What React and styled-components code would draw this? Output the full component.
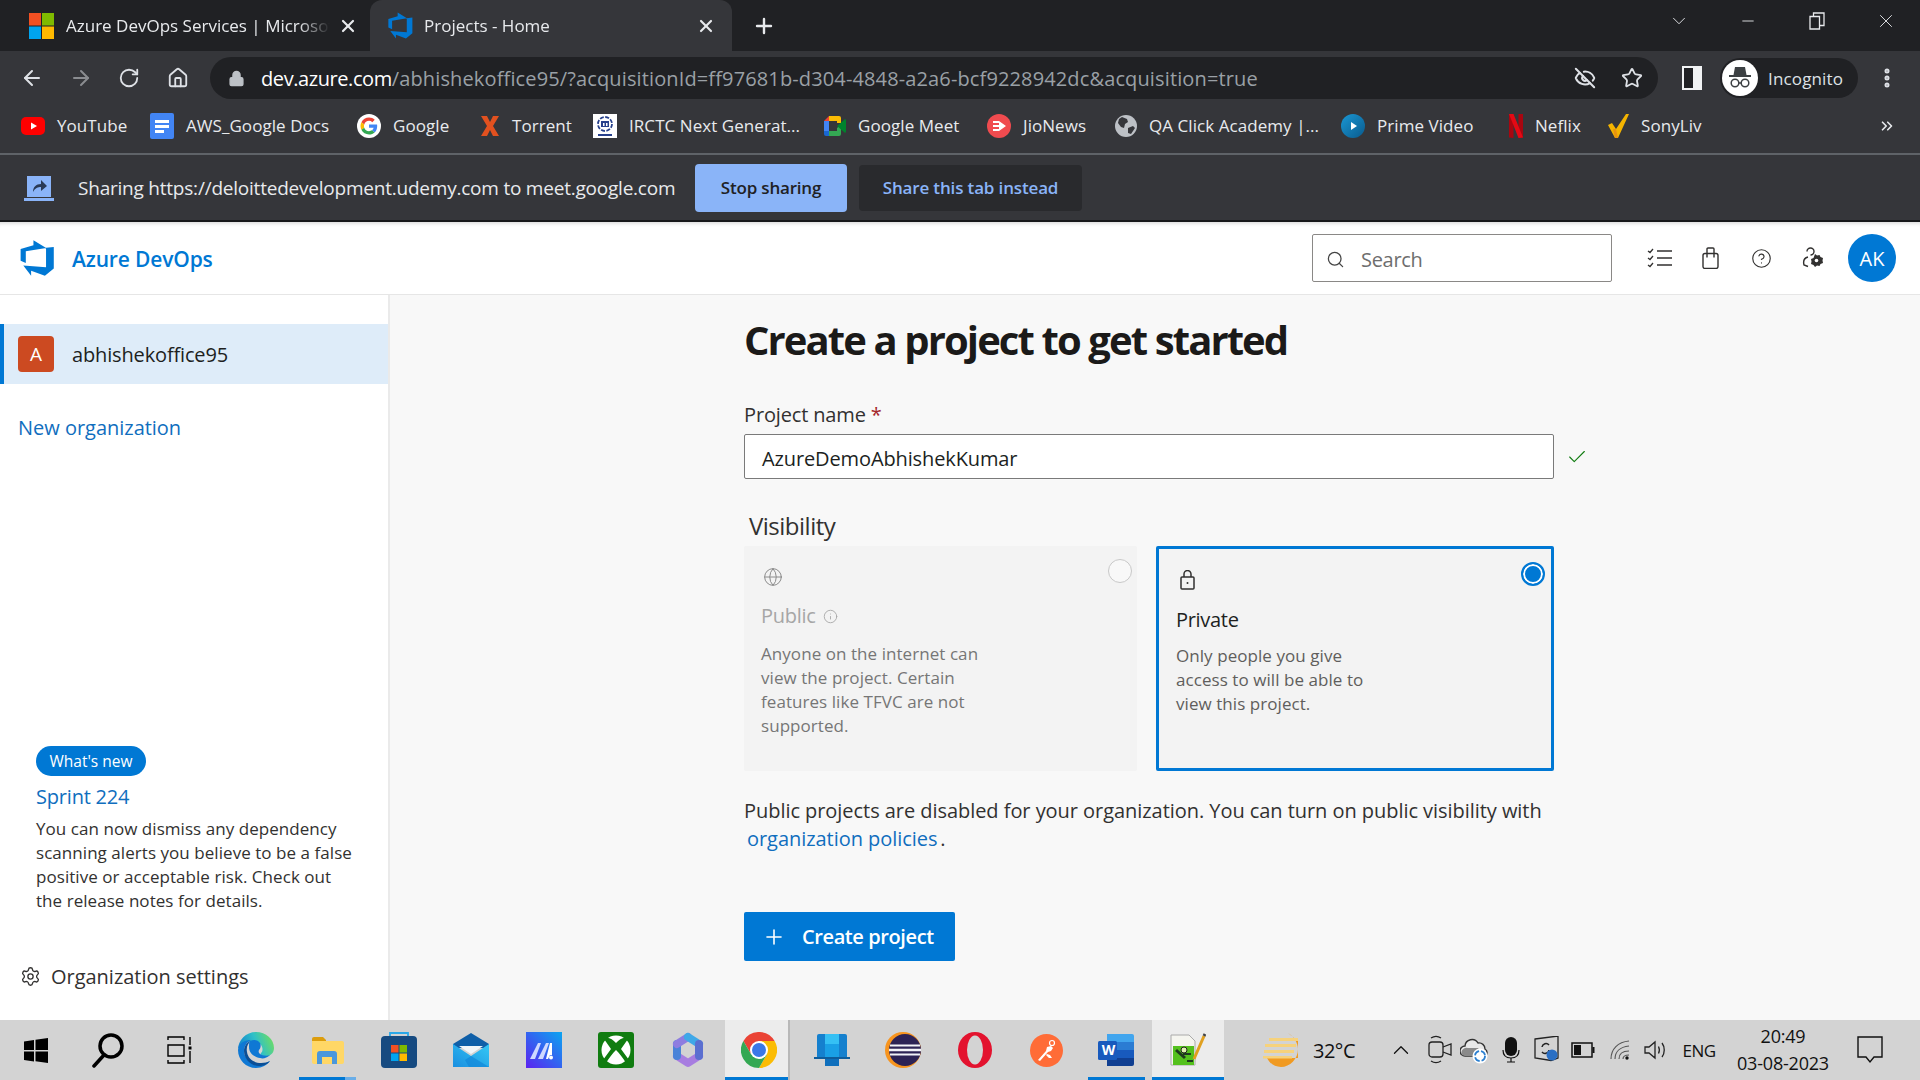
import React from "react";
import styled, { createGlobalStyle } from "styled-components";
import {
  ArrowLeft, ArrowRight, RotateCw, House, Lock, EyeOff, Star, EllipsisVertical, ChevronsRight,
  Plus, X, ChevronDown, Minus, Search, CircleHelp, Settings, Globe, Info, Check, ChevronUp,
} from "lucide-react";

const GlobalStyle = createGlobalStyle`
  html, body { margin: 0; padding: 0; height: 100%; overflow: hidden; }
  body { font-family: "Open Sans", "Noto Sans", sans-serif; }
  * { box-sizing: border-box; }
`;

const Page = styled.div`
  width: 1920px;
  height: 1080px;
  display: flex;
  flex-direction: column;
  overflow: hidden;
`;

/* browser chrome */
const TabStrip = styled.div`
  height: 51px;
  flex: none;
  display: flex;
  align-items: stretch;
  background: #202124;
  color: #e8eaed;
`;
const Tab = styled.div`
  width: ${(p) => p.$w}px;
  display: flex;
  align-items: center;
  padding-left: ${(p) => p.$pad}px;
  gap: ${(p) => p.$gap || 12}px;
  font-size: 17px;
  letter-spacing: 0;
  white-space: nowrap;
  background: ${(p) => (p.$active ? "#35363a" : "transparent")};
  border-radius: 12px 12px 0 0;
`;
const TabTitle = styled.span`
  width: ${(p) => p.$w}px;
  overflow: hidden;
  -webkit-mask-image: linear-gradient(90deg, #000 88%, transparent);
  mask-image: linear-gradient(90deg, #000 88%, transparent);
`;
const TabClose = styled.div`
  margin-left: ${(p) => p.$ml || 0}px;
  display: flex;
`;
const NewTab = styled.div`
  width: 64px;
  display: flex;
  align-items: center;
  justify-content: center;
`;
const WindowControls = styled.div`
  margin-left: auto;
  display: flex;
  align-items: center;
  padding-bottom: 9px;
`;
const WinButton = styled.div`
  width: 69px;
  display: flex;
  justify-content: center;
`;
const Toolbar = styled.div`
  height: 49px;
  flex: none;
  display: flex;
  align-items: center;
  background: #35363a;
  color: #dee1e6;
  padding-left: 8px;
  padding-top: 5px;
`;
const NavButton = styled.div`
  width: 48.5px;
  display: flex;
  justify-content: center;
  color: ${(p) => (p.$dim ? "#8a8c90" : "#dee1e6")};
`;
const Omnibox = styled.div`
  width: 1448px;
  height: 42px;
  margin-left: 8px;
  border-radius: 21px;
  background: #202124;
  display: flex;
  align-items: center;
  padding-left: 18px;
  padding-right: 15px;
  gap: 16px;
`;
const UrlText = styled.div`
  flex: 1;
  font-size: 20px;
  letter-spacing: 0.13px;
  color: #9aa0a6;
  white-space: nowrap;
`;
const UrlHost = styled.span`
  color: #fff;
  letter-spacing: -0.42px;
`;
const OmniIcons = styled.div`
  display: flex;
  align-items: center;
  gap: 25px;
`;
const SidePanel = styled.div`
  width: 20px;
  height: 24px;
  margin-left: 24px;
  border: 2px solid #f1f3f4;
  border-right-width: 9px;
  background: #202124;
`;
const Profile = styled.div`
  width: 138px;
  height: 40px;
  margin-left: 18px;
  border-radius: 20px;
  background: #202124;
  display: flex;
  align-items: center;
  padding-left: 2px;
  gap: 10px;
  font-size: 17px;
  letter-spacing: 0.15px;
`;
const ProfileAvatar = styled.div`
  width: 36px;
  height: 36px;
  border-radius: 50%;
  background: #fff;
  display: flex;
  align-items: center;
  justify-content: center;
`;
const MoreButton = styled.div`
  margin-left: 17px;
  display: flex;
`;
const BookmarkBar = styled.div`
  height: 55px;
  flex: none;
  display: flex;
  align-items: center;
  padding-left: 21px;
  padding-bottom: 2px;
  background: #35363a;
  color: #e8eaed;
  border-bottom: 2px solid #5f6368;
`;
const Bookmark = styled.div`
  width: ${(p) => p.$w}px;
  display: flex;
  align-items: center;
  gap: ${(p) => p.$gap || 12}px;
  font-size: 17px;
  letter-spacing: 0.06px;
  white-space: nowrap;
`;
const BookmarkIcon = styled.div`
  width: 24px;
  height: 26px;
  flex: none;
  display: flex;
  align-items: center;
  justify-content: center;
`;
const MoreBookmarks = styled.div`
  margin-left: auto;
  padding-right: 24px;
  display: flex;
`;
const ShareBar = styled.div`
  height: 67px;
  flex: none;
  display: flex;
  align-items: center;
  padding-left: 24px;
  padding-top: 1px;
  background: #35363a;
  color: #e8eaed;
  border-bottom: 2px solid #17181a;
`;
const ShareText = styled.div`
  margin-left: 24px;
  width: 617px;
  font-size: 19px;
  letter-spacing: -0.22px;
  white-space: nowrap;
`;
const ShareButton = styled.div`
  height: ${(p) => (p.$primary ? 48 : 46)}px;
  width: ${(p) => p.$w}px;
  margin-right: 12px;
  padding-bottom: 2px;
  border-radius: 4px;
  display: flex;
  align-items: center;
  justify-content: center;
  font-size: 17px;
  font-weight: 600;
  letter-spacing: ${(p) => (p.$primary ? -0.2 : -0.15)}px;
  background: ${(p) => (p.$primary ? "#8ab4f8" : "#292a2d")};
  color: ${(p) => (p.$primary ? "#202124" : "#8ab4f8")};
`;

/* azure devops header */
const AppHeader = styled.header`
  height: 73px;
  flex: none;
  display: flex;
  align-items: center;
  padding-left: 16px;
  padding-right: 24px;
  background: #fff;
  border-bottom: 1px solid #e6e6e6;
  box-shadow: inset 0 5px 4px -4px rgba(0, 0, 0, 0.18);
`;
const Brand = styled.div`
  margin-left: 16px;
  padding-top: 2px;
  font-size: 21px;
  font-weight: 600;
  letter-spacing: -0.15px;
  color: #0078d4;
`;
const SearchBox = styled.div`
  margin-left: auto;
  width: 300px;
  height: 48px;
  padding-top: 2px;
  border: 1px solid #8a8886;
  border-radius: 2px;
  display: flex;
  align-items: center;
  padding-left: 13px;
  gap: 16px;
  font-size: 20px;
  letter-spacing: -0.3px;
  color: #6e6e6e;
`;
const HeaderIcons = styled.div`
  display: flex;
  align-items: center;
  margin-left: 22px;
  color: #323130;
`;
const HeaderIcon = styled.div`
  width: 51px;
  display: flex;
  justify-content: center;
`;
const UserAvatar = styled.div`
  margin-left: 10px;
  width: 48px;
  height: 48px;
  border-radius: 50%;
  background: #0078d4;
  color: #fff;
  font-size: 20px;
  display: flex;
  align-items: center;
  justify-content: center;
`;

/* page body */
const Body = styled.div`
  flex: 1;
  min-height: 0;
  display: flex;
`;
const Sidebar = styled.aside`
  width: 390px;
  flex: none;
  display: flex;
  flex-direction: column;
  padding-top: 29px;
  background: #fff;
  border-right: 2px solid #eaeaea;
`;
const OrgRow = styled.div`
  height: 60px;
  display: flex;
  align-items: center;
  gap: 18px;
  background: #deecf9;
  border-left: 4px solid #0078d4;
  padding-left: 14px;
  font-size: 20px;
  letter-spacing: -0.15px;
  color: #201f1e;
`;
const OrgAvatar = styled.div`
  width: 36px;
  height: 36px;
  border-radius: 4px;
  background: #cc4a21;
  color: #fff;
  font-size: 19px;
  display: flex;
  align-items: center;
  justify-content: center;
`;
const NewOrg = styled.div`
  margin: 30px 0 0 18px;
  font-size: 20px;
  letter-spacing: -0.02px;
  color: #106ebe;
`;
const News = styled.div`
  margin-top: auto;
  padding-left: 36px;
`;
const Pill = styled.div`
  width: 110px;
  height: 30px;
  border-radius: 15px;
  background: #0078d4;
  color: #fff;
  font-size: 15.5px;
  letter-spacing: 0;
  display: flex;
  align-items: center;
  justify-content: center;
`;
const SprintTitle = styled.div`
  margin-top: 6px;
  font-size: 20px;
  line-height: 30px;
  letter-spacing: -0.2px;
  color: #106ebe;
`;
const NewsText = styled.div`
  margin-top: 5px;
  width: 322px;
  font-size: 17px;
  line-height: 24px;
  letter-spacing: 0.05px;
  color: #323130;
`;
const OrgSettings = styled.div`
  height: 44px;
  margin: 41px 0 22px;
  padding-left: 20px;
  display: flex;
  align-items: center;
  gap: 10px;
  font-size: 20px;
  letter-spacing: -0.02px;
  color: #323130;
`;
const Main = styled.main`
  flex: 1;
  background: #f8f8f8;
  padding: 17px 0 0 354px;
`;
const Title = styled.h1`
  margin: 0;
  font-size: 40px;
  line-height: 56px;
  font-weight: 700;
  letter-spacing: -1.9px;
  color: #1b1a19;
`;
const FieldLabel = styled.div`
  margin-top: 33px;
  font-size: 20px;
  line-height: 28px;
  letter-spacing: -0.15px;
  color: #323130;
`;
const Required = styled.span`
  color: #a4262c;
`;
const FieldRow = styled.div`
  margin-top: 5px;
  display: flex;
  align-items: center;
  gap: 12px;
`;
const TextField = styled.div`
  width: 810px;
  height: 45px;
  padding: 3px 17px 0;
  border: 1px solid #7a7a7a;
  border-radius: 2px;
  background: #fff;
  display: flex;
  align-items: center;
  font-size: 20px;
  letter-spacing: -0.12px;
  color: #201f1e;
`;
const SectionLabel = styled.div`
  margin: 31px 0 0 5px;
  font-size: 24px;
  line-height: 32px;
  letter-spacing: -0.5px;
  color: #323130;
`;
const Cards = styled.div`
  margin-top: 4px;
  width: 810px;
  display: flex;
  justify-content: space-between;
`;
const Card = styled.div`
  position: relative;
  width: ${(p) => (p.$selected ? 398 : 393)}px;
  height: 225px;
  background: #f3f3f3;
  padding: ${(p) => (p.$selected ? "21px 17px" : "21px 17px")};
  border: ${(p) => (p.$selected ? "3px solid #0078d4" : "none")};
  border-radius: 2px;
`;
const CardIcon = styled.div`
  display: flex;
  height: 20px;
  margin-left: ${(p) => p.$ml}px;
`;
const RadioMark = styled.div`
  position: absolute;
  top: ${(p) => (p.$selected ? 13 : 13)}px;
  right: ${(p) => (p.$selected ? 6 : 5)}px;
  width: 24px;
  height: 24px;
  border-radius: 50%;
  border: ${(p) => (p.$selected ? "2px solid #0078d4" : "1px solid #c8c8c8")};
  background: ${(p) => (p.$selected ? "#0078d4" : "#f8f8f8")};
  box-shadow: ${(p) => (p.$selected ? "inset 0 0 0 2px #fff" : "none")};
`;
const CardTitle = styled.div`
  margin-top: ${(p) => (p.$selected ? 15 : 14)}px;
  display: flex;
  align-items: center;
  gap: 8px;
  font-size: 20px;
  line-height: 30px;
  letter-spacing: -0.3px;
  color: ${(p) => (p.$selected ? "#201f1e" : "#a6a6a6")};
`;
const CardText = styled.div`
  margin-top: ${(p) => (p.$selected ? 9 : 11)}px;
  width: ${(p) => (p.$selected ? 212 : 240)}px;
  font-size: 17px;
  line-height: 24px;
  letter-spacing: 0.06px;
  color: ${(p) => (p.$selected ? "#605e5c" : "#767676")};
`;
const Notice = styled.div`
  margin-top: 26px;
  width: 830px;
  font-size: 20px;
  line-height: 28px;
  letter-spacing: -0.05px;
  color: #323130;
`;
const PolicyLink = styled.span`
  color: #106ebe;
  margin-left: 3px;
  margin-right: 3px;
`;
const PrimaryButton = styled.div`
  margin-top: 59px;
  width: 211px;
  height: 49px;
  border-radius: 2px;
  background: #0078d4;
  color: #fff;
  display: flex;
  align-items: center;
  padding-left: 18px;
  gap: 16px;
  font-size: 20px;
  font-weight: 600;
  letter-spacing: -0.4px;
`;

/* windows taskbar */
const Taskbar = styled.div`
  height: 60px;
  flex: none;
  display: flex;
  align-items: stretch;
  background: #d3d3d3;
  color: #111;
`;
const TaskCell = styled.div`
  position: relative;
  width: ${(p) => p.$w || 71.7}px;
  margin-left: ${(p) => p.$ml || 0}px;
  padding-left: ${(p) => p.$pad || 0}px;
  flex: none;
  display: flex;
  align-items: center;
  justify-content: center;
  background: ${(p) => (p.$active ? "#ececec" : "transparent")};
  border-right: ${(p) => (p.$sep ? "2px solid #b8b8b8" : "none")};
  &::after {
    content: "";
    display: ${(p) => (p.$running ? "block" : "none")};
    position: absolute;
    left: ${(p) => p.$inset || 0}px;
    right: ${(p) => p.$inset || 0}px;
    bottom: 0;
    height: 3px;
    background: ${(p) => (p.$tail ? "linear-gradient(90deg, #0078d4 80%, #6aaee8 80%)" : "#0078d4")};
  }
`;
const Tray = styled.div`
  margin-left: auto;
  display: flex;
  align-items: center;
  padding-right: 28px;
`;
const TrayItem = styled.div`
  width: ${(p) => p.$w}px;
  padding-left: ${(p) => p.$pad || 0}px;
  display: flex;
  justify-content: center;
  align-items: center;
  gap: ${(p) => p.$gap || 8}px;
  font-size: ${(p) => p.$size || 19}px;
  letter-spacing: -0.5px;
`;
const Clock = styled.div`
  width: 130px;
  text-align: center;
  font-size: 18px;
  line-height: 27px;
  letter-spacing: -0.2px;
`;

const AzureLogo = ({ size }) => (
  <svg width={size} height={size} viewBox="0 0 18 18">
    <path fill="#0078d4" d="M17 4v9.74l-4 3.28-6.2-2.26V17L3.29 12.41l10.23.8V4.44zm-3.41.49L7.85 1v2.29L2.08 5v5.24l2.33 1.02V5.99z" />
  </svg>
);

const MicrosoftLogo = () => (
  <svg width="25" height="26" viewBox="0 0 25 26">
    <rect width="12" height="12.5" fill="#f25022" />
    <rect x="13" width="12" height="12.5" fill="#7fba00" />
    <rect y="13.5" width="12" height="12.5" fill="#00a4ef" />
    <rect x="13" y="13.5" width="12" height="12.5" fill="#ffb900" />
  </svg>
);

const ShareIcon = () => (
  <svg width="30" height="30" viewBox="0 0 30 30">
    <path fill="#8ab4f8" d="M3 3h24v21H3z" />
    <path fill="#8ab4f8" d="M0 25h30v3H0z" />
    <path fill="#2a3a55" d="M9 19c0-5 3-8 8-8V7l6 6-6 5v-4c-3 0-6 1-8 5z" />
  </svg>
);

const YoutubeIcon = () => (
  <svg width="24" height="24" viewBox="0 0 24 24">
    <rect y="3" width="24" height="18" rx="5" fill="#f00" />
    <path fill="#fff" d="M10 8.500v7l6-3.500z" />
  </svg>
);
const DocsIcon = () => (
  <svg width="24" height="26" viewBox="0 0 24 26">
    <rect width="24" height="26" rx="2" fill="#4285f4" />
    <path fill="#fff" d="M5 7h14v3H5zM5 12h14v3H5zM5 17h9v3H5z" />
  </svg>
);
const GoogleIcon = () => (
  <svg width="24" height="24" viewBox="0 0 48 48">
    <circle cx="24" cy="24" r="24" fill="#fff" />
    <g transform="translate(7 7) scale(.71)">
      <path fill="#EA4335" d="M24 9.500c3.500 0 6.700 1.200 9.200 3.600l6.900-6.900C35.900 2.400 30.500 0 24 0 14.600 0 6.500 5.400 2.600 13.200l8 6.200C12.400 13.700 17.700 9.500 24 9.500z" />
      <path fill="#4285F4" d="M46.980 24.550c0-1.570-.15-3.090-.38-4.550H24v9.020h12.940c-.58 2.960-2.260 5.480-4.780 7.180l7.730 6c4.510-4.180 7.090-10.360 7.090-17.650z" />
      <path fill="#FBBC05" d="M10.530 28.590c-.48-1.450-.76-2.990-.76-4.590s.27-3.140.76-4.590l-7.980-6.190C.92 16.460 0 20.120 0 24c0 3.880.92 7.540 2.560 10.780l7.970-6.190z" />
      <path fill="#34A853" d="M24 48c6.480 0 11.930-2.130 15.890-5.810l-7.730-6c-2.150 1.450-4.920 2.300-8.160 2.300-6.260 0-11.570-4.220-13.470-9.910l-7.980 6.190C6.510 42.620 14.620 48 24 48z" />
    </g>
  </svg>
);
const TorrentIcon = () => (
  <svg width="20" height="20" viewBox="0 0 20 20">
    <path fill="#e2511f" d="M1 0h6l3 6 3-6h6l-6 10 6 10h-6l-3-6-3 6H1l6-10z" />
  </svg>
);
const IrctcIcon = () => (
  <svg width="24" height="24" viewBox="0 0 24 24">
    <rect width="24" height="24" fill="#fff" />
    <circle cx="12" cy="10" r="7" fill="none" stroke="#27408b" strokeWidth="1.800" strokeDasharray="4 1.500" />
    <path fill="#27408b" d="M8 7h8v6H8zM5 20h14v2H5z" />
    <path fill="#fff" d="M10 9h1.500v3H10zM13 9h1.500v3H13z" />
  </svg>
);
const MeetIcon = () => (
  <svg width="24" height="20" viewBox="0 0 24 20">
    <path fill="#ea4335" d="M5 0v5H0z" />
    <path fill="#4285f4" d="M0 5h5v10H0z" />
    <path fill="#1967d2" d="M0 15h5v5H2a2 2 0 0 1-2-2z" />
    <path fill="#fbbc04" d="M5 0h10a2 2 0 0 1 2 2v5h-4V5H5z" />
    <path fill="#34a853" d="M5 15h8v-3l4-3v9a2 2 0 0 1-2 2H5z" />
    <path fill="#00832d" d="M13 10l7-6a1 1 0 0 1 2 .5v11a1 1 0 0 1-2 .5l-7-6z" />
  </svg>
);
const JioIcon = () => (
  <svg width="24" height="24" viewBox="0 0 24 24">
    <circle cx="12" cy="12" r="12" fill="#f04b4f" />
    <path fill="#fff" d="M6 7h6v2H6zM6 11h6v2H6zM6 15h6v2H6zM12 7l7 5-7 5z" />
  </svg>
);
const QaIcon = () => (
  <svg width="24" height="24" viewBox="0 0 24 24">
    <circle cx="12" cy="12" r="11" fill="#bdc1c6" />
    <path fill="#35363a" d="M8 3l5 2 1 3-3 2-1 4-3-1-3-4 1-4zM14 14l5-2 2 2-4 6-3-1z" />
  </svg>
);
const PrimeIcon = () => (
  <svg width="24" height="24" viewBox="0 0 24 24">
    <defs>
      <linearGradient id="primeA" x1="0" y1="0" x2="1" y2="1">
        <stop offset="0" stopColor="#1a98d5" />
        <stop offset="1" stopColor="#0a5a8c" />
      </linearGradient>
    </defs>
    <circle cx="12" cy="12" r="12" fill="url(#primeA)" />
    <path fill="#fff" d="M10 8l6 4-6 4z" />
  </svg>
);
const NetflixIcon = () => (
  <svg width="14" height="24" viewBox="0 0 14 24">
    <path fill="#a80610" d="M0 0h4.500v24L0 23.500zM9.500 0H14v23.500L9.500 24z" />
    <path fill="#e50914" d="M0 0h4.500L14 23.500 9.500 24z" />
  </svg>
);
const SonyIcon = () => (
  <svg width="21" height="24" viewBox="0 0 21 24">
    <path fill="#f4b400" d="M0 11l4-2 4 6L18 0h3L10 24H7z" />
    <path fill="#e89410" d="M7 24L5 15l3 0 2 9z" />
  </svg>
);
const IncognitoIcon = () => (
  <svg width="26" height="26" viewBox="0 0 26 26" fill="none" stroke="#3c4043">
    <path fill="#3c4043" stroke="none" d="M8 2h10l1.500 8H24v2H2v-2h4.500z" />
    <circle cx="8" cy="18" r="3.800" strokeWidth="1.500" />
    <circle cx="18" cy="18" r="3.800" strokeWidth="1.500" />
    <path strokeWidth="1.500" d="M11.800 18h2.400" />
  </svg>
);
const RestoreIcon = () => (
  <svg width="16" height="18" viewBox="0 0 16 18" fill="none" stroke="#e8eaed" strokeWidth="1.300">
    <path d="M1 4.500h9.500V17H1zM4.500 4.500V1H15v12.500h-4.500" />
  </svg>
);
const TasksIcon = () => (
  <svg width="26" height="20" viewBox="0 0 26 20" fill="none" stroke="#323130">
    <path strokeWidth="1.300" d="M1 3l2 1.500L6 1M1 10l2 1.500L6 8M1 17l2 1.500L6 15" />
    <path strokeWidth="1.500" d="M10 3h15M10 10h15M10 17h15" />
  </svg>
);
const BagIcon = () => (
  <svg width="17" height="22" viewBox="0 0 17 22" fill="none" stroke="#323130" strokeWidth="1.400">
    <rect x="1" y="6.500" width="15" height="15" rx="2" />
    <path d="M5 6.500V2a1 1 0 0 1 1-1h5a1 1 0 0 1 1 1v4.500M5 6.500v4M12 6.500v4" />
  </svg>
);
const UserGearIcon = () => (
  <svg width="22" height="22" viewBox="0 0 22 22" fill="none" stroke="#323130" strokeWidth="1.400">
    <path d="M5 4.500a3.500 3.500 0 1 1 3.500 3.500M6 10c-4 1-5 4-4 8l4 1.500" />
    <path fill="#323130" stroke="none" d="M13 7l2 1.500L17.500 8l1 2 2.500 1-.5 2.500.5 2.500-2.500 1-1 2-2.500-.5-2 1.500-1.500-2-2.500-1 .5-2.500-.5-2.500 2.500-1z" />
    <circle cx="14.500" cy="13.500" r="1.800" fill="#fff" stroke="none" />
  </svg>
);
const PadlockIcon = () => (
  <svg width="15" height="20" viewBox="0 0 15 20" fill="none" stroke="#323130" strokeWidth="1.500">
    <rect x="1" y="7" width="13" height="12" rx="1" />
    <path d="M4 7V4a3.500 3.500 0 0 1 7 0v3" />
    <circle cx="7.500" cy="13" r="1" fill="#323130" stroke="none" />
  </svg>
);

const WindowsIcon = () => (
  <svg width="24" height="25" viewBox="0 0 24 25">
    <path fill="#000" d="M0 3.500l10-1.500v10H0zM11.500 1.800L24 0v12H11.500zM0 13.500h10v10L0 22zM11.500 13.500H24V25l-12.500-1.800z" />
  </svg>
);
const SearchGlass = () => (
  <svg width="36" height="36" viewBox="0 0 36 36" fill="none" stroke="#000" strokeWidth="3.500">
    <circle cx="21" cy="14" r="11" />
    <path d="M14 23L4 34" strokeLinecap="round" />
  </svg>
);
const TaskViewIcon = () => (
  <svg width="26" height="28" viewBox="0 0 26 28" fill="none" stroke="#000" strokeWidth="1.400">
    <path d="M2 4V1h16v3M2 9h16v11H2zM2 24v3h16v-3M24 1v8M24 15v12" />
    <rect x="22.500" y="10.500" width="3" height="3" fill="#000" stroke="none" />
  </svg>
);
const EdgeIcon = () => (
  <svg width="36" height="36" viewBox="0 0 36 36">
    <defs>
      <linearGradient id="edgeA" x1="0" y1="0.700" x2="1" y2="0.400">
        <stop offset="0" stopColor="#0d7ccf" />
        <stop offset="0.550" stopColor="#2fc0c8" />
        <stop offset="1" stopColor="#6cdc66" />
      </linearGradient>
    </defs>
    <path fill="url(#edgeA)" d="M0 18C0 8 8 0 18 0c10 0 18 7 18 16 0 6-5 9-10 8-3-.500-4-2-3-3 2-2 2-5 0-8-3-4-9-5-13-3C5 12 1 14 0 18z" />
    <path fill="#0f78d4" d="M0 18C1 10 8 8 13 8c-4 2-7 6-7 11 0 7 7 13 15 13 4 0 8-1 11-3-3 4-8 7-14 7C8 36 0 28 0 18z" />
    <path fill="#0b4f96" d="M13 9c-3 2-5 6-4 11 1 7 7 11 14 11 4 0 7-1 9-2-3 4-7 5-11 5C13 34 6 27 6 19c0-5 3-9 7-10z" />
    <path fill="#0f78d4" d="M12 9c4-2 8-1 10 2 1 2 1 5-1 7-1 2 0 4 3 5 3 1 6 1 8 0-3 3-7 4-10 3-6-1-11-5-11-11 0-3 0-5 1-6z" />
  </svg>
);
const ExplorerIcon = () => (
  <svg width="32" height="27" viewBox="0 0 32 27">
    <path fill="#dc9d0d" d="M0 2a2 2 0 0 1 2-2h9l3 3v4H0z" />
    <path fill="#ffd766" d="M0 4h30a2 2 0 0 1 2 2v19a2 2 0 0 1-2 2H2a2 2 0 0 1-2-2z" />
    <path fill="#4a97dc" d="M5 27V17a3 3 0 0 1 3-3h14a3 3 0 0 1 3 3v10h-5v-7H10v7z" />
  </svg>
);
const StoreIcon = () => (
  <svg width="36" height="36" viewBox="0 0 36 36">
    <path fill="none" stroke="#2aa8e8" strokeWidth="1.800" d="M9 6V1h18v5" />
    <rect y="4" width="36" height="32" rx="4" fill="#164a80" />
    <rect x="10" y="13" width="7.500" height="7.500" fill="#f25022" />
    <rect x="18.500" y="13" width="7.500" height="7.500" fill="#7fba00" />
    <rect x="10" y="21.500" width="7.500" height="7.500" fill="#00a4ef" />
    <rect x="18.500" y="21.500" width="7.500" height="7.500" fill="#ffb900" />
  </svg>
);
const MailIcon = () => (
  <svg width="36" height="34" viewBox="0 0 36 34">
    <defs>
      <linearGradient id="mailA" x1="1" y1="0" x2="0" y2="1">
        <stop offset="0" stopColor="#35c8f5" />
        <stop offset="1" stopColor="#1a8fe0" />
      </linearGradient>
    </defs>
    <path fill="#0f5fa8" d="M18 0l18 11v4H0v-4z" />
    <path fill="#f2f6f9" d="M6 13h24L18 21z" />
    <path fill="url(#mailA)" d="M0 11l18 12 18-12v23H0z" />
    <path fill="#1287d8" d="M36 34H16l-4-7 6-4 18 11z" opacity=".7" />
  </svg>
);
const LinearIcon = () => (
  <svg width="36" height="36" viewBox="0 0 36 36">
    <defs>
      <linearGradient id="linA" x1="1" y1="0" x2="0" y2="1">
        <stop offset="0" stopColor="#0ba5f0" />
        <stop offset="1" stopColor="#5b22f0" />
      </linearGradient>
    </defs>
    <rect width="36" height="36" fill="url(#linA)" />
    <path fill="#cfd8ff" d="M4 27l8-16h3L9 27zM12 27l8-16h3l-6 16z" />
    <path fill="#fff" d="M24 11h2v12h-2l-2 4h-2z" />
    <circle cx="25" cy="25.500" r="2" fill="#fff" />
  </svg>
);
const XboxIcon = () => (
  <svg width="36" height="36" viewBox="0 0 36 36">
    <rect width="36" height="36" rx="3" fill="#107c10" />
    <circle cx="18" cy="18" r="14.500" fill="#fff" />
    <path fill="#107c10" d="M18 11c-3-3-7-6-10-5l-2 1 7 10-8 11 3 3c3-5 7-10 10-13 3 3 7 8 10 13l3-3-8-11 7-10-2-1c-3-1-7 2-10 5z" />
  </svg>
);
const CopilotIcon = () => (
  <svg width="32" height="36" viewBox="0 0 32 36" fill="none" strokeWidth="8" strokeLinejoin="round" strokeLinecap="round">
    <path stroke="#a77de0" d="M5 24l11 7 11-7" />
    <path stroke="#4a83d8" d="M5 12v12" />
    <path stroke="#8e7de0" d="M5 12l11-7" />
    <path stroke="#3fa8e8" d="M16 5l11 7" />
    <path stroke="#5b6fd0" d="M27 12l0 12" />
  </svg>
);
const ChromeIcon = ({ size }) => (
  <svg width={size} height={size} viewBox="0 0 36 36">
    <path fill="#ea4335" d="M33.600 9H18L10.200 22.500 2.400 9a18 18 0 0 1 31.200 0z" />
    <path fill="#fbbc04" d="M33.600 9A18 18 0 0 1 18 36l7.800-13.500L18 9z" />
    <path fill="#34a853" d="M18 36A18 18 0 0 1 2.400 9l7.800 13.500h15.600z" />
    <circle cx="18" cy="18" r="9" fill="#fff" />
    <circle cx="18" cy="18" r="7" fill="#3b78e7" />
  </svg>
);
const BlueAppIcon = () => (
  <svg width="36" height="32" viewBox="0 0 36 32">
    <path fill="#1580ce" d="M3 2a2 2 0 0 1 2-2h26a2 2 0 0 1 2 2v22H3z" />
    <path fill="#0e5d9c" d="M0 23h36v2H0z" />
    <path fill="#35c0f4" d="M11 0h14v10H11z" />
    <path fill="#1aa0e6" d="M11 10h14v13H11z" />
    <path fill="#0f6fbc" d="M11 25h14v7H11z" />
  </svg>
);
const EclipseIcon = () => (
  <svg width="36" height="36" viewBox="0 0 36 36">
    <circle cx="18" cy="18" r="18" fill="#f7941e" />
    <circle cx="20" cy="18" r="16" fill="#2c2255" />
    <path fill="#f2f2f7" d="M5 12.500h30v2H5zM4 16.800h32v2.400H4zM5 21.500h30v2H5z" />
  </svg>
);
const OperaIcon = () => (
  <svg width="34" height="36" viewBox="0 0 34 36">
    <ellipse cx="17" cy="18" rx="17" ry="18" fill="#e3122e" />
    <ellipse cx="17" cy="18" rx="8" ry="14.500" fill="#d3d3d3" />
  </svg>
);
const PostmanIcon = () => (
  <svg width="33" height="33" viewBox="0 0 33 33">
    <circle cx="16.500" cy="16.500" r="16.500" fill="#ff6c37" />
    <path fill="#fff" d="M8 26l8-9 1-4 4-1 2 2-2 3-3 1-8 9zM17 20l3 1 2 3-3 0-3-3z" />
    <circle cx="22" cy="9" r="2.500" fill="none" stroke="#fff" strokeWidth="1.200" />
  </svg>
);
const WordIcon = () => (
  <svg width="36" height="32" viewBox="0 0 36 32">
    <path fill="#41a5ee" d="M9 0h25a2 2 0 0 1 2 2v6H9z" />
    <path fill="#2b7cd3" d="M9 8h27v8H9z" />
    <path fill="#185abd" d="M9 16h27v8H9z" />
    <path fill="#103f91" d="M9 24h27v6a2 2 0 0 1-2 2H9z" />
    <rect y="7" width="19" height="19" rx="1.500" fill="#185abd" />
  </svg>
);
const WordLetter = styled.span`
  position: absolute;
  left: 21px;
  top: 20px;
  color: #fff;
  font-size: 14px;
  font-weight: 700;
`;
const NotepadIcon = () => (
  <svg width="36" height="34" viewBox="0 0 36 34">
    <path fill="#f5f5ef" stroke="#aaa" d="M1 2h18l6 6v24H1z" />
    <path fill="#54c11d" d="M3 13h21v19H3z" />
    <path fill="#1e3a1e" d="M7 16l9 8-2 2-9-8zM13 20h8v2h-8zM17 27h6v2h-6z" />
    <circle cx="14" cy="17" r="3" fill="#dff0b0" stroke="#222" />
    <path stroke="#e0a020" strokeWidth="3" d="M24 26L34 3" />
    <path stroke="#444" strokeWidth="3" d="M34 3l1-2" />
  </svg>
);
const WeatherIcon = () => (
  <svg width="36" height="34" viewBox="0 0 36 34">
    <path fill="#f09a22" d="M25 0c5 3 10 9 10 16 0 10-8 18-17 18-6 0-11-3-14-9h31V8z" />
    <path fill="#f6d27c" d="M6 5h29v3H6zM2 11h31v3H2zM1 17h30v3H1zM0 23h29v2.500H0z" />
  </svg>
);
const MeetTrayIcon = () => (
  <svg width="26" height="30" viewBox="0 0 26 30" fill="none" stroke="#222" strokeWidth="1.300">
    <rect x="2" y="7" width="14" height="15" rx="3" />
    <path d="M16 12l8-3v11l-8-3M4 3c3-2 7-2 10 0M4 26c3 2 7 2 10 0" />
  </svg>
);
const CloudTrayIcon = () => (
  <svg width="32" height="28" viewBox="0 0 32 28">
    <path fill="#e8e8e8" stroke="#333" strokeWidth="1.400" d="M5 20a5 5 0 0 1 0-10 7 7 0 0 1 13-3 6 6 0 0 1 7 6 4 4 0 0 1 0 7z" />
    <path fill="#8a8a8a" d="M2 19a5 5 0 0 1 6-7h10l6 8H5z" />
    <circle cx="20" cy="20" r="7.500" fill="#fff" />
    <circle cx="20" cy="20" r="5" fill="none" stroke="#2a7fd0" strokeWidth="1.800" strokeDasharray="6 2" />
  </svg>
);
const MicTray = () => (
  <svg width="18" height="26" viewBox="0 0 18 26">
    <rect x="3" y="0" width="12" height="19" rx="6" fill="#111" />
    <path fill="none" stroke="#111" strokeWidth="1.200" d="M1 13c0 5 3 8 8 8s8-3 8-8M9 21v4M5 25h8" />
  </svg>
);
const TrayBox = () => (
  <svg width="26" height="28" viewBox="0 0 26 28">
    <path fill="none" stroke="#222" strokeWidth="1.300" d="M1 3l23-3v22l-7 2.500L1 22z" />
    <path fill="none" stroke="#222" strokeWidth="1.500" d="M8 11a4 4 0 0 1 7-2M15 14a4 4 0 0 1-7 2" />
    <circle cx="18" cy="19" r="5.500" fill="#2a6fc4" />
  </svg>
);
const BatteryTray = () => (
  <svg width="24" height="16" viewBox="0 0 24 16">
    <rect x="1" y="1" width="20" height="14" fill="none" stroke="#111" strokeWidth="1.500" />
    <rect x="3" y="3" width="7" height="10" fill="#111" />
    <rect x="21.500" y="5" width="2" height="6" fill="#111" />
  </svg>
);
const WifiTray = () => (
  <svg width="20" height="20" viewBox="0 0 20 20" fill="none" stroke="#555" strokeWidth="1.100">
    <path d="M1 19C1 9 8 2 19 1M5 19c0-7 5-12 14-13M9 19c0-5 3-8 10-8M13 19c0-2 2-4 6-4" />
    <circle cx="17" cy="18" r="1.700" fill="#111" stroke="none" />
  </svg>
);
const VolumeTray = () => (
  <svg width="24" height="20" viewBox="0 0 24 20" fill="none" stroke="#222" strokeWidth="1.300">
    <path d="M1 7h4l6-5v16l-6-5H1zM14.500 6.500c1 2 1 5 0 7M18 3c3 4 3 10 0 14" />
  </svg>
);
const NotifyIcon = () => (
  <svg width="26" height="28" viewBox="0 0 26 28" fill="none" stroke="#111" strokeWidth="1.400">
    <path d="M1 1h24v20h-8l-4 5-4-5H1z" />
  </svg>
);

const bookmarks = [
  { w: 129, icon: <YoutubeIcon />, label: "YouTube" },
  { w: 207, icon: <DocsIcon />, label: "AWS_Google Docs" },
  { w: 121, icon: <GoogleIcon />, label: "Google" },
  { w: 115, gap: 10, icon: <TorrentIcon />, label: "Torrent" },
  { w: 231, icon: <IrctcIcon />, label: "IRCTC Next Generat..." },
  { w: 163, gap: 10, icon: <MeetIcon />, label: "Google Meet" },
  { w: 127, icon: <JioIcon />, label: "JioNews" },
  { w: 227, gap: 11, icon: <QaIcon />, label: "QA Click Academy |..." },
  { w: 163, icon: <PrimeIcon />, label: "Prime Video" },
  { w: 102, gap: 7, icon: <NetflixIcon />, label: "Neflix" },
  { w: 120, gap: 11, icon: <SonyIcon />, label: "SonyLiv" },
];

const taskApps = [
  { icon: <WindowsIcon /> },
  { icon: <SearchGlass /> },
  { icon: <TaskViewIcon /> },
  { icon: <EdgeIcon />, ml: 5 },
  { icon: <ExplorerIcon />, running: true, inset: 7, tail: true },
  { icon: <StoreIcon /> },
  { icon: <MailIcon /> },
  { icon: <LinearIcon />, ml: 1.5 },
  { icon: <XboxIcon /> },
  { icon: <CopilotIcon /> },
  { icon: <ChromeIcon size={36} />, w: 65, ml: 1.5, pad: 5, active: true, running: true, sep: true },
  { icon: <BlueAppIcon />, ml: 6 },
  { icon: <EclipseIcon /> },
  { icon: <OperaIcon /> },
  { icon: <PostmanIcon /> },
  { icon: <><WordIcon /><WordLetter>W</WordLetter></>, ml: -2, running: true, inset: 7 },
  { icon: <NotepadIcon />, active: true, running: true },
];

export default function App() {
  return (
    <Page>
      <GlobalStyle />
      <TabStrip>
        <Tab $w={370} $pad={29}>
          <MicrosoftLogo />
          <TabTitle $w={264}>Azure DevOps Services | Microsoft</TabTitle>
          <TabClose $ml={-4}><X size={20} strokeWidth={2.6} color="#e8eaed" /></TabClose>
        </Tab>
        <Tab $w={362} $pad={15} $gap={10} $active>
          <AzureLogo size={29} />
          <TabTitle $w={262}>Projects - Home</TabTitle>
          <TabClose><X size={20} strokeWidth={2.6} color="#e8eaed" /></TabClose>
        </Tab>
        <NewTab><Plus size={24} strokeWidth={2.4} /></NewTab>
        <WindowControls>
          <WinButton><ChevronDown size={22} strokeWidth={1} /></WinButton>
          <WinButton><Minus size={18} strokeWidth={1.2} /></WinButton>
          <WinButton><RestoreIcon /></WinButton>
          <WinButton><X size={22} strokeWidth={1} /></WinButton>
        </WindowControls>
      </TabStrip>

      <Toolbar>
        <NavButton><ArrowLeft size={24} strokeWidth={2} /></NavButton>
        <NavButton $dim><ArrowRight size={24} strokeWidth={2} /></NavButton>
        <NavButton><RotateCw size={22} strokeWidth={2} /></NavButton>
        <NavButton><House size={22} strokeWidth={2} /></NavButton>
        <Omnibox>
          <Lock size={17} fill="#bdc1c6" color="#bdc1c6" />
          <UrlText>
            <UrlHost>dev.azure.com</UrlHost>/abhishekoffice95/?acquisitionId=ff97681b-d304-4848-a2a6-bcf9228942dc&amp;acquisition=true
          </UrlText>
          <OmniIcons>
            <EyeOff size={22} color="#dee1e6" strokeWidth={2.2} />
            <Star size={22} color="#dee1e6" strokeWidth={2} />
          </OmniIcons>
        </Omnibox>
        <SidePanel />
        <Profile>
          <ProfileAvatar><IncognitoIcon /></ProfileAvatar>
          Incognito
        </Profile>
        <MoreButton><EllipsisVertical size={24} strokeWidth={3} /></MoreButton>
      </Toolbar>

      <BookmarkBar>
        {bookmarks.map((b) => (
          <Bookmark key={b.label} $w={b.w} $gap={b.gap}>
            <BookmarkIcon>{b.icon}</BookmarkIcon>
            {b.label}
          </Bookmark>
        ))}
        <MoreBookmarks><ChevronsRight size={18} strokeWidth={2.2} /></MoreBookmarks>
      </BookmarkBar>

      <ShareBar>
        <ShareIcon />
        <ShareText>Sharing https://deloittedevelopment.udemy.com to meet.google.com</ShareText>
        <ShareButton $primary $w={152}>Stop sharing</ShareButton>
        <ShareButton $w={223}>Share this tab instead</ShareButton>
      </ShareBar>

      <AppHeader>
        <AzureLogo size={40} />
        <Brand>Azure DevOps</Brand>
        <SearchBox>
          <Search size={19} color="#444" strokeWidth={1.6} />
          Search
        </SearchBox>
        <HeaderIcons>
          <HeaderIcon><TasksIcon /></HeaderIcon>
          <HeaderIcon><BagIcon /></HeaderIcon>
          <HeaderIcon><CircleHelp size={21} strokeWidth={1.3} /></HeaderIcon>
          <HeaderIcon><UserGearIcon /></HeaderIcon>
        </HeaderIcons>
        <UserAvatar>AK</UserAvatar>
      </AppHeader>

      <Body>
        <Sidebar>
          <OrgRow>
            <OrgAvatar>A</OrgAvatar>
            abhishekoffice95
          </OrgRow>
          <NewOrg>New organization</NewOrg>
          <News>
            <Pill>What's new</Pill>
            <SprintTitle>Sprint 224</SprintTitle>
            <NewsText>
              You can now dismiss any dependency scanning alerts you believe to be a false positive or acceptable risk. Check out the release notes for details.
            </NewsText>
          </News>
          <OrgSettings>
            <Settings size={21} strokeWidth={1.5} />
            Organization settings
          </OrgSettings>
        </Sidebar>
        <Main>
          <Title>Create a project to get started</Title>
          <FieldLabel>Project name <Required>*</Required></FieldLabel>
          <FieldRow>
            <TextField>AzureDemoAbhishekKumar</TextField>
            <Check size={22} color="#107c10" strokeWidth={1.2} />
          </FieldRow>
          <SectionLabel>Visibility</SectionLabel>
          <Cards>
            <Card>
              <RadioMark />
              <CardIcon $ml={2}><Globe size={20} color="#8c8c8c" strokeWidth={1.2} /></CardIcon>
              <CardTitle>Public <Info size={15} color="#a6a6a6" strokeWidth={1.4} /></CardTitle>
              <CardText>Anyone on the internet can view the project. Certain features like TFVC are not supported.</CardText>
            </Card>
            <Card $selected>
              <RadioMark $selected />
              <CardIcon $ml={4}><PadlockIcon /></CardIcon>
              <CardTitle $selected>Private</CardTitle>
              <CardText $selected>Only people you give access to will be able to view this project.</CardText>
            </Card>
          </Cards>
          <Notice>
            Public projects are disabled for your organization. You can turn on public visibility with<br />
            <PolicyLink>organization policies</PolicyLink>.
          </Notice>
          <PrimaryButton>
            <Plus size={24} strokeWidth={1.6} />
            Create project
          </PrimaryButton>
        </Main>
      </Body>

      <Taskbar>
        {taskApps.map((a, i) => (
          <TaskCell key={i} $w={a.w} $ml={a.ml} $pad={a.pad} $active={a.active} $running={a.running} $sep={a.sep} $inset={a.inset} $tail={a.tail}>{a.icon}</TaskCell>
        ))}
        <Tray>
          <TrayItem $w={134} $size={20} $gap={14}><WeatherIcon />32°C</TrayItem>
          <TrayItem $w={46} $pad={4}><ChevronUp size={26} strokeWidth={1.2} /></TrayItem>
          <TrayItem $w={36}><MeetTrayIcon /></TrayItem>
          <TrayItem $w={35}><CloudTrayIcon /></TrayItem>
          <TrayItem $w={36}><MicTray /></TrayItem>
          <TrayItem $w={36}><TrayBox /></TrayItem>
          <TrayItem $w={36}><BatteryTray /></TrayItem>
          <TrayItem $w={37}><WifiTray /></TrayItem>
          <TrayItem $w={35}><VolumeTray /></TrayItem>
          <TrayItem $w={45} $pad={7} $size={17}>ENG</TrayItem>
          <Clock>20:49<br />03-08-2023</Clock>
          <TrayItem $w={44}><NotifyIcon /></TrayItem>
        </Tray>
      </Taskbar>
    </Page>
  );
}
